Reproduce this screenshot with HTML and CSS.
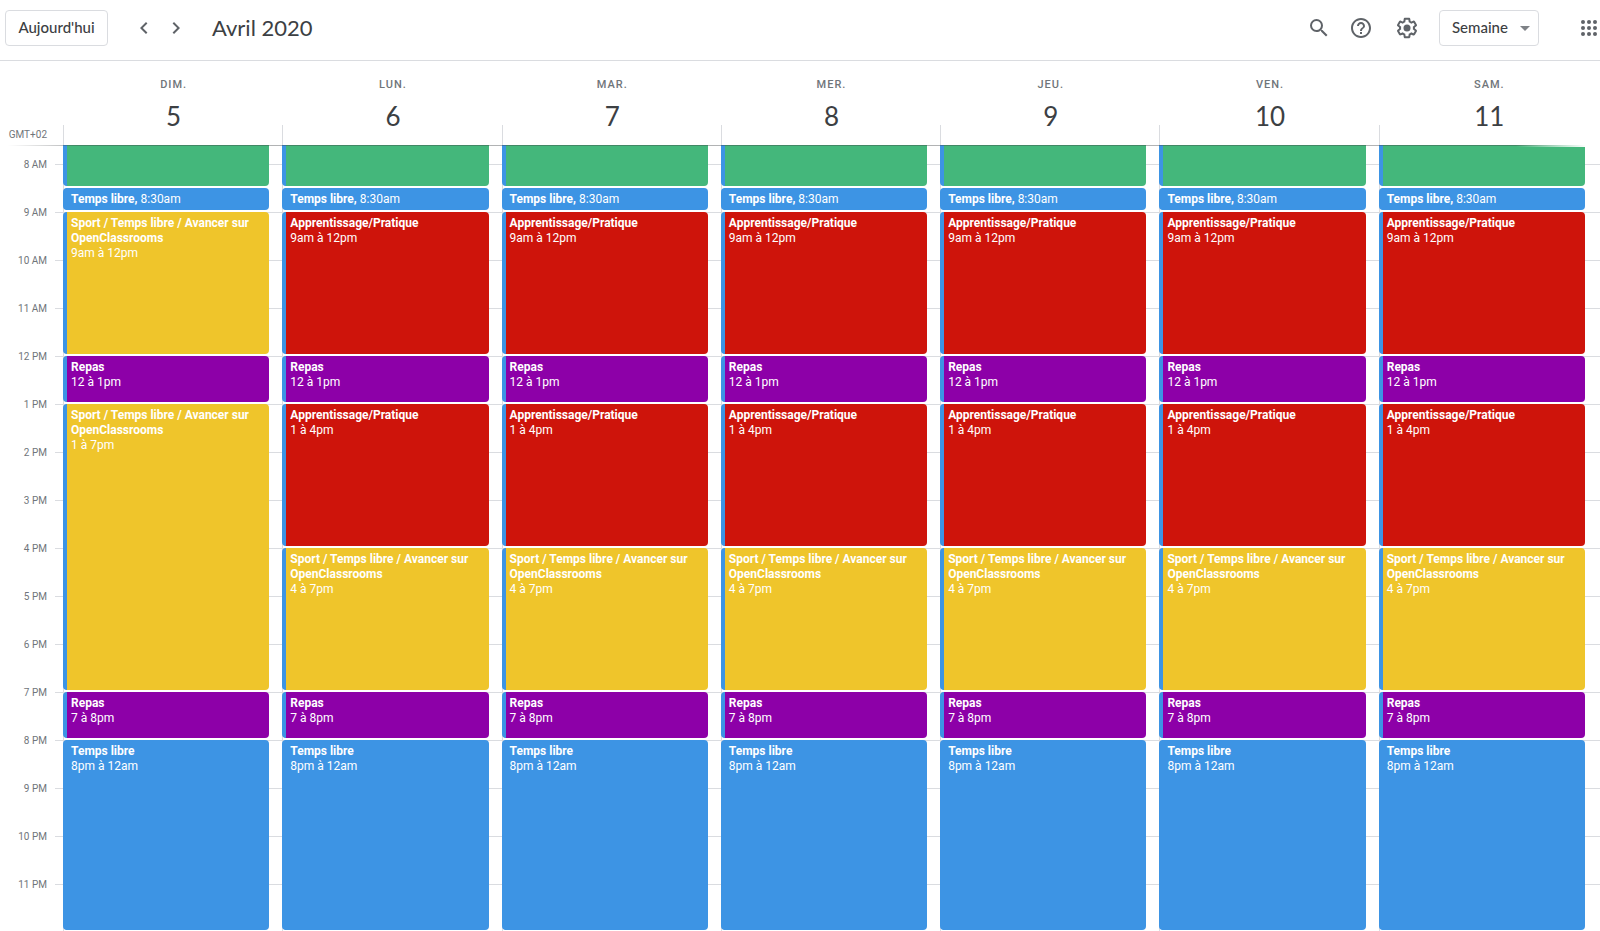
FILE: index.html
```html
<!DOCTYPE html>
<html lang="fr">
<head>
<meta charset="utf-8">
<title>Agenda - Avril 2020</title>
<link rel="stylesheet" href="styles.css">
</head>
<body>
<header class="toolbar">
  <button class="today" type="button">Aujourd'hui</button>
  <div class="pager">
    <button class="icon-btn" type="button" aria-label="Semaine précédente"><svg viewBox="0 0 24 24" width="24" height="24"><path d="M15.41 7.41L14 6l-6 6 6 6 1.41-1.41L10.83 12z"/></svg></button>
    <button class="icon-btn" type="button" aria-label="Semaine suivante"><svg viewBox="0 0 24 24" width="24" height="24"><path d="M10 6L8.59 7.41 13.17 12l-4.58 4.59L10 18l6-6z"/></svg></button>
  </div>
  <h1 class="title">Avril 2020</h1>
  <div class="tools">
    <button class="icon-btn" type="button" aria-label="Rechercher"><svg viewBox="0 0 24 24" width="24" height="24"><path d="M15.5 14h-.79l-.28-.27A6.47 6.47 0 0 0 16 9.5 6.5 6.5 0 1 0 9.5 16c1.61 0 3.09-.59 4.23-1.57l.27.28v.79l5 4.99L20.49 19l-4.99-5zm-6 0A4.5 4.5 0 1 1 14 9.5 4.5 4.5 0 0 1 9.5 14z"/></svg></button>
    <button class="icon-btn help" type="button" aria-label="Aide"><svg viewBox="0 0 24 24" width="24" height="24"><path d="M11 18h2v-2h-2v2zm1-16C6.48 2 2 6.48 2 12s4.48 10 10 10 10-4.480 10-10S17.520 2 12 2zm0 18c-4.410 0-8-3.590-8-8s3.590-8 8-8 8 3.590 8 8-3.590 8-8 8zm0-14c-2.210 0-4 1.790-4 4h2c0-1.100.9-2 2-2s2 .9 2 2c0 2-3 1.750-3 5h2c0-2.250 3-2.500 3-5 0-2.210-1.790-4-4-4z"/></svg></button>
    <button class="icon-btn" type="button" aria-label="Paramètres"><svg viewBox="0 0 24 24" width="24" height="24"><path d="M13.85 22.25h-3.7c-.74 0-1.360-.54-1.450-1.270l-.27-1.890c-.27-.14-.53-.29-.79-.46l-1.800.72c-.7.26-1.470-.03-1.810-.65L2.200 15.530c-.35-.66-.2-1.440.36-1.880l1.530-1.190c-.01-.15-.02-.3-.02-.46 0-.15.01-.31.02-.46l-1.520-1.190c-.59-.45-.74-1.260-.37-1.880l1.850-3.190c.34-.62 1.110-.9 1.790-.63l1.810.73c.26-.17.52-.32.78-.46l.27-1.910c.09-.7.71-1.250 1.440-1.250h3.700c.74 0 1.360.54 1.450 1.270l.27 1.890c.27.14.53.29.79.46l1.800-.72c.71-.26 1.480.03 1.820.65l1.840 3.180c.36.66.2 1.440-.36 1.880l-1.520 1.190c.01.15.02.3.02.46s-.01.31-.02.46l1.520 1.190c.56.45.72 1.230.37 1.860l-1.860 3.220c-.34.62-1.110.9-1.800.63l-1.800-.72c-.26.17-.52.32-.78.46l-.27 1.910c-.1.68-.72 1.220-1.460 1.220zm-3.230-2h2.760l.37-2.550.53-.22c.44-.18.88-.44 1.340-.78l.45-.34 2.380.96 1.380-2.400-2.030-1.580.07-.56c.03-.26.06-.51.06-.78s-.03-.53-.06-.78l-.07-.56 2.030-1.580-1.390-2.400-2.390.96-.45-.35c-.42-.32-.87-.58-1.330-.77l-.52-.22-.37-2.550h-2.760l-.37 2.550-.53.21c-.44.19-.88.44-1.340.79l-.45.33-2.380-.95-1.390 2.390 2.030 1.580-.07.56a7 7 0 0 0-.06.79c0 .26.02.53.06.78l.07.56-2.030 1.580 1.380 2.400 2.390-.96.45.35c.43.33.86.58 1.330.77l.53.22.38 2.550z"/><circle cx="12" cy="12" r="3.500"/></svg></button>
    <span class="view">
      <select class="view-select" aria-label="Affichage"><option>Semaine</option></select>
      <svg class="view-arrow" viewBox="0 0 10 5" width="10" height="5"><path d="M0 0h10L5 5z"/></svg>
    </span>
    <button class="icon-btn apps" type="button" aria-label="Applications"><svg viewBox="0 0 24 24" width="24" height="24"><circle cx="6" cy="6" r="2"/><circle cx="12" cy="6" r="2"/><circle cx="18" cy="6" r="2"/><circle cx="6" cy="12" r="2"/><circle cx="12" cy="12" r="2"/><circle cx="18" cy="12" r="2"/><circle cx="6" cy="18" r="2"/><circle cx="12" cy="18" r="2"/><circle cx="18" cy="18" r="2"/></svg></button>
  </div>
</header>
<main class="calendar">
  <div class="week head" id="head"><span class="zone">GMT+02</span></div>
  <div class="scroller"><div class="week grid" id="grid"><div class="hours" id="hours"></div></div></div>
</main>
<script src="calendar.js"></script>
</body>
</html>
```
FILE: styles.css
```css
* { box-sizing: border-box; }
body {
  margin: 0;
  height: 100vh;
  display: flex;
  flex-direction: column;
  overflow: hidden;
  background: #fff;
  color: #3c4043;
  font-family: Roboto, "Liberation Sans", sans-serif;
}
button, select { font: inherit; color: inherit; margin: 0; }

.toolbar {
  flex: none;
  display: flex;
  align-items: center;
  height: 61px;
  padding: 0 0 4px 5px;
  border-bottom: 1px solid #dadce0;
  font-family: Lato, "Open Sans", sans-serif;
}
.today, .view-select {
  height: 36px;
  padding: 0 12px 2px;
  border: 1px solid #dadce0;
  border-radius: 4px;
  background: #fff;
  font-size: 15px;
  font-weight: 500;
}
.today { width: 103px; padding: 0 0 2px; }
.icon-btn {
  display: flex;
  padding: 0;
  border: 0;
  background: none;
}
.icon-btn svg, .view-arrow { fill: #5f6368; }
.pager { display: flex; gap: 8px; margin-left: 24px; }
.title {
  margin: 0 0 0 24px;
  font-size: 22px;
  line-height: 28px;
  font-weight: 400;
}
.tools { display: flex; align-items: center; margin-left: auto; gap: 20px; }
.help { margin: 0 2px 0 -2px; }
.view { position: relative; display: flex; }
.view-select { appearance: none; width: 100px; }
.view-arrow { position: absolute; right: 9px; top: 16px; pointer-events: none; opacity: .8; }
.apps { margin: 0 -1px 0 18px; }

.calendar { flex: 1; min-height: 0; display: flex; flex-direction: column; }
.week {
  display: grid;
  grid-template-columns: 63px repeat(7, minmax(0, 1fr));
  padding-right: 2px;
}
.head { flex: none; height: 84px; }
.zone {
  align-self: end;
  padding: 0 16px 4px 0;
  text-align: right;
  font-size: 10px;
  line-height: 12px;
  color: #70757a;
}
.day-head {
  display: flex;
  flex-direction: column;
  align-items: center;
  padding: 16px 0 0 2px;
  background: linear-gradient(#dadce0, #dadce0) left bottom / 1px 20px no-repeat;
}
.day-name {
  font-size: 11px;
  line-height: 16px;
  font-weight: 500;
  letter-spacing: 1px;
  color: #70757a;
}
.day-num {
  font-family: Lato, "Open Sans", sans-serif;
  font-size: 26px;
  line-height: 46px;
}

.scroller { position: relative; flex: 1; min-height: 0; overflow: hidden; }
.scroller::after {
  content: "";
  position: absolute;
  top: 0;
  left: 8px;
  right: 0;
  height: 1px;
  background: linear-gradient(to right, transparent, rgba(60, 64, 67, .4) 70px, rgba(60, 64, 67, .4) calc(100% - 80px), transparent);
}
.scroller::before {
  content: "";
  position: absolute;
  z-index: 1;
  top: 0;
  right: 0;
  width: 84px;
  height: 2px;
  background: linear-gradient(to right, transparent, #fff 70px);
}
.grid {
  background: repeating-linear-gradient(transparent 0 19px, #dadce0 19px 20px, transparent 20px 48px) 55px 0 no-repeat;
}
.hours { display: flex; flex-direction: column; padding-right: 16px; }
.hour {
  display: flex;
  align-items: flex-end;
  justify-content: flex-end;
  height: 48px;
  font-size: 10px;
  line-height: 12px;
  color: #70757a;
}
.hour:first-child { height: 26px; }
.day {
  display: grid;
  grid-template-rows: 43px repeat(31, 24px);
  padding-right: 13px;
  border-left: 1px solid #dadce0;
}
.event {
  margin: 0 0 2px -1px;
  padding: 4px 4px 0;
  border-left: 4px solid #3d94e4;
  border-radius: 4px;
  color: #fff;
  font-size: 12px;
  line-height: 15px;
  overflow: hidden;
}
.event b { font-weight: 700; }
.event b, .event time { display: block; }
.short b, .short time { display: inline; }
.sleep { background: #44b77b; border-top-left-radius: 0; border-top-right-radius: 0; }
.free { background: #3d94e4; }
.sport { background: #efc52b; }
.learn { background: #ce140b; }
.meal { background: #8d00a8; }
```
FILE: calendar.js
```js
const days = [['DIM.', 5], ['LUN.', 6], ['MAR.', 7], ['MER.', 8], ['JEU.', 9], ['VEN.', 10], ['SAM.', 11]];
const sport = 'Sport / Temps libre / Avancer sur OpenClassrooms';
const learn = 'Apprentissage/Pratique';

// [type, start hour, end hour, title, time]
const morning = [
  ['sleep', 8, 8.5, '', ''],
  ['free short', 8.5, 9, 'Temps libre,', '8:30am'],
];
const evening = [
  ['meal', 19, 20, 'Repas', '7 à 8pm'],
  ['free', 20, 24, 'Temps libre', '8pm à 12am'],
];
const lunch = ['meal', 12, 13, 'Repas', '12 à 1pm'];
const sunday = [...morning, ['sport', 9, 12, sport, '9am à 12pm'], lunch,
  ['sport', 13, 19, sport, '1 à 7pm'], ...evening];
const weekday = [...morning, ['learn', 9, 12, learn, '9am à 12pm'], lunch,
  ['learn', 13, 16, learn, '1 à 4pm'], ['sport', 16, 19, sport, '4 à 7pm'], ...evening];

const row = h => (h - 8) * 2 + 1;
const head = document.getElementById('head');
const grid = document.getElementById('grid');

days.forEach(([name, num], i) => {
  head.insertAdjacentHTML('beforeend',
    `<div class="day-head"><span class="day-name">${name}</span><span class="day-num">${num}</span></div>`);
  const events = (i ? weekday : sunday).map(([type, from, to, title, time]) =>
    `<div class="event ${type}" style="grid-row:${row(from)}/${row(to)}">${title ? `<b>${title}</b> <time>${time}</time>` : ''}</div>`);
  grid.insertAdjacentHTML('beforeend', `<div class="day">${events.join('')}</div>`);
});

for (let h = 8; h < 24; h++) {
  document.getElementById('hours').insertAdjacentHTML('beforeend',
    `<span class="hour">${h > 12 ? h - 12 : h} ${h < 12 ? 'AM' : 'PM'}</span>`);
}
```
